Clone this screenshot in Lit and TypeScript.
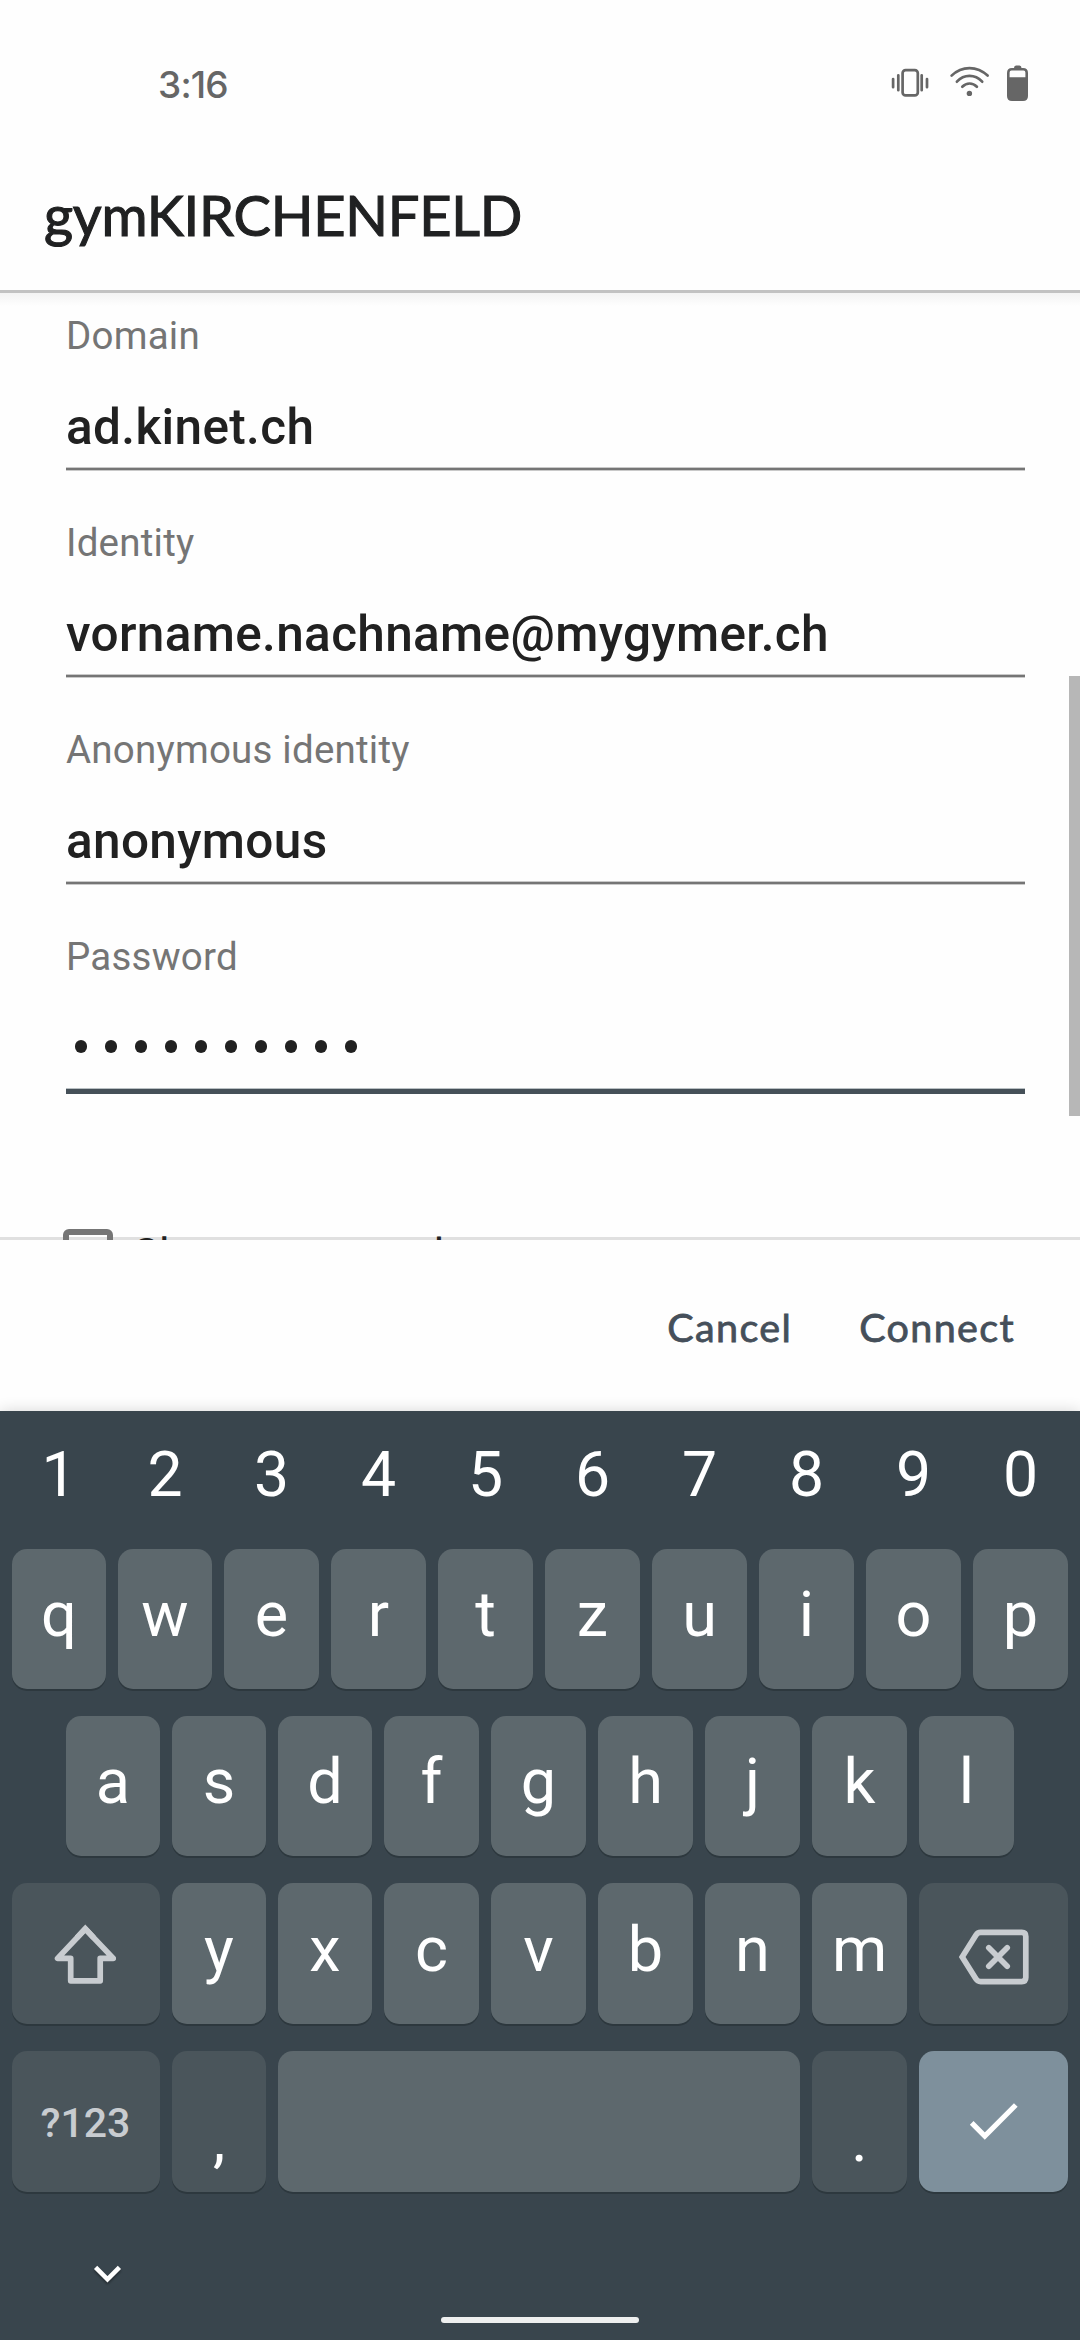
import { LitElement, html, css, svg, nothing } from "lit";
import { customElement, property } from "lit/decorators.js";

const shiftIcon = html`<svg width="62" height="62" viewBox="54 1922 62 62" fill="none" stroke="#c8ccd0" stroke-width="5.7">
  <path stroke-linejoin="round" d="M85.3 1928 L57.6 1957.4 H70.7 V1979.8 H100.2 V1957.4 H113.3 Z"/>
  <path stroke-linejoin="miter" d="M77 1936.6 L85.3 1927.6 L93.6 1936.6"/>
</svg>`;

const backspaceIcon = html`<svg width="72" height="58" viewBox="957 1927.5 72 58" fill="none" stroke="#c8ccd0" stroke-width="5.7">
  <path d="M961.2 1956.5 L975 1934.6 Q976.6 1931.9 979.6 1931.9 H1020.8 Q1024.8 1931.9 1024.8 1935.9 V1977.1 Q1024.8 1981.1 1020.8 1981.1 H979.6 Q976.6 1981.1 975 1978.4 Z"/>
  <path stroke-linecap="round" d="M987.8 1947.3 L1006.2 1965.7 M1006.2 1947.3 L987.8 1965.7"/>
</svg>`;

const checkIcon = html`<svg width="50" height="40" viewBox="969 2103 50 40" fill="none" stroke="#fff" stroke-width="5.2">
  <path d="M971.7 2122.8 L984.8 2136 L1015.8 2105"/>
</svg>`;

type KeySpec = { label?: unknown; kind?: string; name?: string };
const letters = (s: string): KeySpec[] => [...s].map((c) => ({ label: c }));

@customElement("form-field")
export class FormField extends LitElement {
  @property() label = "";
  @property() value = "";
  @property({ type: Boolean, reflect: true }) active = false;
  static styles = css`
    :host { display: flex; flex-direction: column; height: 157px; }
    .label { font-size: 38.5px; line-height: 44px; letter-spacing: 0.22px; color: #757575; }
    .value { margin-top: 40px; font-size: 49.5px; line-height: 58px; letter-spacing: 0.35px; font-weight: 500; color: #212121; white-space: nowrap; }
    .line { margin-top: 11px; height: 4px; flex: none; background: linear-gradient(#c9c9c9 0 1px, #757575 1px 3px, #c9c9c9 3px); }
    :host([active]) .line { margin-top: 14px; height: 6px; background: linear-gradient(#b9c0c3 0 1px, #455058 1px); }
    .dots { display: flex; flex: none; align-items: center; height: 55px; margin-top: 40px; padding-left: 9px; gap: 18px; }
    .dot { width: 12px; height: 13px; border-radius: 6px; background: #212121; }
  `;
  render() {
    return html`<div class="label">${this.label}</div>
      ${this.active
        ? html`<div class="dots">${Array.from({ length: 10 }, () => html`<span class="dot"></span>`)}</div>`
        : html`<div class="value">${this.value}</div>`}
      <div class="line"></div>`;
  }
}

@customElement("soft-keyboard")
export class SoftKeyboard extends LitElement {
  static styles = css`
    :host { display: flex; flex-direction: column; height: 929px; background: #39454d; color: #fff; box-shadow: 0 0 14px rgba(0, 0, 0, 0.16); z-index: 1; position: relative; }
    .numbers, .row { display: grid; column-gap: 12px; padding: 0 12px; flex: none; }
    .numbers { grid-template-columns: repeat(2, 94px) repeat(8, 95px); height: 138px; font-size: 62.5px; line-height: 127px; text-align: center; }
    .row { grid-template-rows: 140px; margin-bottom: 27px; }
    .top { grid-template-columns: repeat(2, 94px) repeat(8, 95px); }
    .mid { grid-template-columns: repeat(3, 94px) repeat(6, 95px); padding: 0 66px; }
    .low { grid-template-columns: 148px repeat(2, 94px) repeat(5, 95px) 149px; grid-template-rows: 141px; }
    .last { grid-template-columns: 148px 94px 522px 95px 149px; grid-template-rows: 141px; }
    .key { display: flex; justify-content: center; border-radius: 15px; background: #5d686d; box-shadow: 0 2px 0 #2d383e; font-size: 63px; line-height: 131px; }
    .low .key { line-height: 133px; }
    .fn { background: #4a555b; }
    .icon { align-items: center; }
    .shift { padding-right: 2px; }
    .back { padding-top: 6px; }
    .enter { background: #7e909c; padding-top: 2px; }
    .sym { font-size: 41px; line-height: 144px; font-weight: 500; color: #c8ccd0; padding-right: 1px; }
    .punct { line-height: 177px; font-size: 62px; }
    .nav { display: flex; flex-direction: column; flex: 1; }
    .hide { margin: 44px 0 0 91px; filter: drop-shadow(0 2px 1px rgba(0, 0, 0, 0.35)); }
    .home { width: 198px; height: 6px; border-radius: 3px; background: #eeefef; margin: 30px auto 0; }
  `;
  private row(cls: string, keys: KeySpec[]) {
    return html`<div class="row ${cls}">${keys.map((k) => html`<div class="key ${k.kind ?? ""}" aria-label=${k.name ?? nothing}>${k.label ?? nothing}</div>`)}</div>`;
  }
  render() {
    return html`
      <div class="numbers">${[..."1234567890"].map((n) => html`<span>${n}</span>`)}</div>
      ${this.row("top", letters("qwertzuiop"))}
      ${this.row("mid", letters("asdfghjkl"))}
      ${this.row("low", [{ label: shiftIcon, kind: "fn icon shift", name: "Shift" }, ...letters("yxcvbnm"), { label: backspaceIcon, kind: "fn icon back", name: "Delete" }])}
      ${this.row("last", [
        { label: "?123", kind: "fn sym" },
        { label: ",", kind: "fn punct" },
        { name: "Space" },
        { label: ".", kind: "fn punct" },
        { label: checkIcon, kind: "icon enter", name: "Done" },
      ])}
      <div class="nav">
        <svg class="hide" width="33" height="24" viewBox="91 2263 33 24" fill="none" stroke="#fff" stroke-width="4.6"><path d="M95.6 2267.4 L107.5 2279.3 L119.4 2267.4"/></svg>
        <div class="home"></div>
      </div>`;
  }
}

@customElement("app-root")
export class AppRoot extends LitElement {
  static styles = css`
    :host { display: flex; flex-direction: column; width: 1080px; height: 2340px; overflow: hidden; background: #fefefe; font-family: Roboto, "Liberation Sans", sans-serif; }
    .status { display: flex; justify-content: space-between; height: 160px; padding: 0 50px 0 158px; flex: none; box-sizing: border-box; }
    .time { font-family: Inter, Roboto, sans-serif; font-weight: 500; font-size: 37px; line-height: 44px; padding-top: 63px; color: #666; letter-spacing: -0.8px; }
    .icons { margin-top: 60px; }
    .title { height: 130px; padding-left: 44px; flex: none; font-family: Lato, sans-serif; font-size: 56px; line-height: 110px; color: #202122; -webkit-text-stroke: 1.1px #202122; letter-spacing: -0.25px; }
    .content { position: relative; height: 950px; flex: none; box-sizing: border-box; overflow: hidden; padding: 24px 55px 0 66px; background: linear-gradient(#c2c2c2 0 3px, #f3f3f3 3px, #fefefe 16px, #fefefe 947px, #e0e0e0 947px); }
    .fields { display: flex; flex-direction: column; gap: 50px; }
    .thumb { position: absolute; right: 0; top: 386px; width: 11px; height: 440px; background: #b7b7b7; }
    .show { display: flex; margin: 137px 0 0 -3px; }
    .box { width: 50px; height: 50px; box-sizing: border-box; border: 6px solid #757575; border-radius: 6px; }
    .show-label { margin-left: 20px; font-size: 44px; line-height: 52px; color: #212121; white-space: nowrap; }
    .actions { display: flex; justify-content: flex-end; gap: 67px; height: 171px; flex: none; padding-right: 65px; font-family: Lato, sans-serif; font-size: 39.5px; line-height: 173px; letter-spacing: 1.35px; color: #454f5a; -webkit-text-stroke: 0.8px #454f5a; }
  `;
  render() {
    return html`
      <div class="status">
        <div class="time">3:16</div>
        <svg class="icons" width="140" height="45" viewBox="890 60 140 45" fill="none" stroke="#666" stroke-width="2.7" stroke-linecap="round">
          <rect x="902.6" y="70.1" width="15.2" height="25.3" rx="3"/>
          <path d="M898.3 75.3 V90.2 M893.1 79 V87.2 M921.7 75.3 V90.2 M927 79 V87.2"/>
          ${svg`<path d="M951.6 75.6 C962 65.6 977 65.6 987.6 75.6 M956.9 81.7 C964 74 975 74 982.2 81.7 M962.3 86.7 C966.5 82.4 972.7 82.4 976.9 86.7"/>
          <circle cx="969.4" cy="93.4" r="2.7" fill="#666" stroke="none"/>
          <path fill="#666" fill-rule="evenodd" stroke="none" d="M1014 68 Q1014 65.5 1016 65.5 H1019.5 Q1021.5 65.5 1021.5 68 H1023 Q1028 68 1028 73 V96 Q1028 101 1023 101 H1012 Q1007 101 1007 96 V73 Q1007 68 1012 68 Z M1011.5 70.6 Q1009.6 70.6 1009.6 72.5 V77.2 H1025.4 V72.5 Q1025.4 70.6 1023.5 70.6 Z"/>`}
        </svg>
      </div>
      <div class="title">gymKIRCHENFELD</div>
      <div class="content">
        <div class="fields">
          <form-field label="Domain" value="ad.kinet.ch"></form-field>
          <form-field label="Identity" value="vorname.nachname@mygymer.ch"></form-field>
          <form-field label="Anonymous identity" value="anonymous"></form-field>
          <form-field label="Password" active></form-field>
        </div>
        <div class="show"><div class="box"></div><div class="show-label">Show password</div></div>
        <div class="thumb"></div>
      </div>
      <div class="actions"><span>Cancel</span><span>Connect</span></div>
      <soft-keyboard></soft-keyboard>`;
  }
}
